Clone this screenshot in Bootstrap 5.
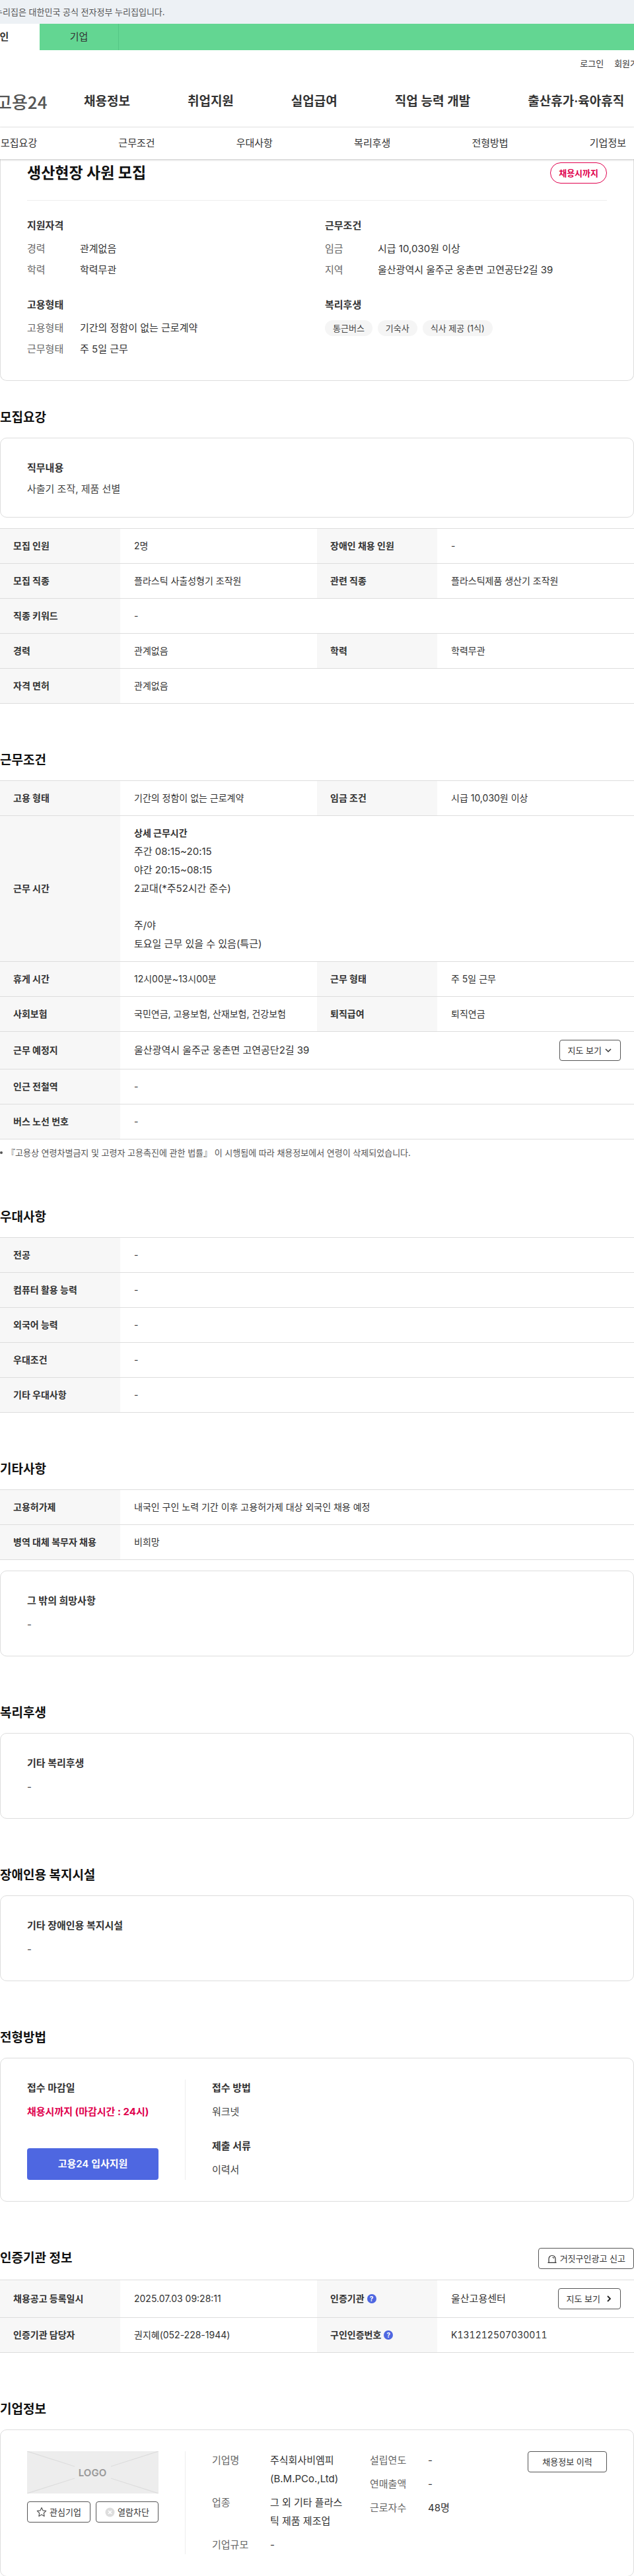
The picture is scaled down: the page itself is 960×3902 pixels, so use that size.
<!DOCTYPE html>
<html lang="ko">
<head>
<meta charset="utf-8">
<meta name="viewport" content="width=device-width, initial-scale=1">
<title>고용24 채용정보 - 생산현장 사원 모집</title>
<link href="https://cdn.jsdelivr.net/npm/bootstrap@5.3.0/dist/css/bootstrap.min.css" rel="stylesheet">
<style>
  body { font-family: Inter, "Noto Sans CJK KR", sans-serif; font-size: 15px; line-height: 26px; color: #333; background: #fff; overflow-x: hidden; }
  a { color: inherit; text-decoration: none; }
  p, dl, dd, ul { margin: 0; }
  dt { font-weight: 400; }
  .gov-bar { background: #edf1f5; height: 36px; line-height: 36px; font-size: 13px; color: #555; overflow: hidden; }
  .gov-bar p { margin-left: -8px; white-space: nowrap; }
  .site-tabs { background: #63d692; height: 40px; overflow: hidden; }
  .site-tabs a { width: 120px; line-height: 40px; text-align: center; border-right: 1px solid #55c785; }
  .site-tabs a.current { background: #fff; margin-left: -60px; font-weight: 700; border-color: #fff; }
  .member-links { height: 40px; overflow: hidden; font-size: 13px; margin-right: -18px; white-space: nowrap; }
  .main-nav { height: 77px; border-bottom: 1px solid #eee; white-space: nowrap; }
  .brand-name { font-family: "Noto Sans CJK KR", sans-serif; font-size: 26px; font-weight: 500; color: #555; margin-left: -6px; width: 133px; }
  .main-nav ul { gap: 87px; font-size: 19px; font-weight: 600; }
  .sub-nav { height: 48px; padding: 0 12px 0 1px; box-shadow: 0 1px 3px rgba(0,0,0,.25); position: relative; background: #fff; }
  .post-card { border: 1px solid #ddd; border-top: 0; border-radius: 0 0 10px 10px; padding: 4px 40px 31px; }
  .post-card h1 { font-size: 23px; font-weight: 700; line-height: 34px; margin: 0; color: #111; }
  .deadline { border: 1px solid #e0004d; border-radius: 16px; color: #e0004d; font-size: 13px; font-weight: 700; line-height: 30px; padding: 0 12px; }
  .post-rule { border-top: 1px solid #eee; margin: 24px 0 25px; }
  .spec-grid { display: grid; grid-template-columns: 427fr 427fr; column-gap: 24px; row-gap: 24px; }
  h3 { font-size: 15px; font-weight: 700; line-height: 26px; margin: 0 0 8px; color: #333; }
  .spec-grid h3 { margin-bottom: 6px; }
  .spec-row { display: flex; line-height: 32px; }
  .spec-row dt { width: 80px; color: #666; }
  .pill { background: #f5f5f5; border-radius: 12px; font-size: 13px; line-height: 24px; padding: 0 12px; color: #444; }
  section { margin-top: 70px; }
  section.first-section { margin-top: 40px; }
  h2 { font-size: 19px; font-weight: 700; line-height: 32px; margin: 0 0 14px; color: #111; }
  .panel { border: 1px solid #ddd; border-radius: 10px; padding: 32px 40px; }
  .panel p { line-height: 30px; color: #444; }
  .panel.duty { padding-bottom: 29px; }
  .panel.duty h3 { margin-bottom: 6px; }
  .panel.duty p { line-height: 26px; }
  .info-table { width: 100%; table-layout: fixed; border-collapse: separate; border-spacing: 0; border-top: 1px solid #ddd; font-size: 14px; line-height: 28px; }
  .info-table th, .info-table td { border-bottom: 1px solid #ddd; padding: 12px 20px; }
  .info-table th { background: #f7f7f7; font-weight: 700; }
  .info-table td { padding-left: 21px; color: #333; }
  .info-table .large-text { font-size: 15px; }
  .info-table .large-text strong { font-size: 14px; }
  .info-table .serial { font-variant-numeric: tabular-nums; }
  .th-col { width: 182px; }
  .line-btn { background: #fff; border: 1px solid #555; border-radius: 4px; font-size: 13px; line-height: 30px; padding: 0 12px; color: #333; display: inline-flex; align-items: center; justify-content: center; gap: 4px; white-space: nowrap; }
  .note { font-size: 13px; line-height: 24px; color: #555; margin-top: 8px; padding-left: 0; list-style: none; }
  .note li { display: flex; align-items: center; gap: 6px; }
  .note li::before { content: ""; width: 4px; height: 4px; border-radius: 50%; background: #555; flex: none; }
  .side-col { width: 240px; padding-right: 40px; border-right: 1px solid #eee; flex: none; }
  .apply-btn { background: #4e67e1; color: #fff; border: 0; border-radius: 4px; height: 48px; font-weight: 600; }
  .panel .urgent { color: #e0004d; font-weight: 700; }
  .help-btn { background: #4e67e1; color: #fff; border: 0; border-radius: 50%; width: 14px; height: 14px; font-size: 10px; font-weight: 700; line-height: 14px; padding: 0; margin-left: 4px; vertical-align: 1px; }
  .company-grid { display: grid; grid-template-columns: 1fr 1fr 120px; column-gap: 31px; align-items: start; }
  .company-grid dl { display: grid; grid-template-columns: 88px 1fr; row-gap: 8px; line-height: 28px; }
  .company-grid dt { color: #666; }
  .company-panel { padding-bottom: 33px; }
  .company-side { min-height: 155px; }
</style>
</head>
<body>
<header>
  <div class="gov-bar"><p>누리집은 대한민국 공식 전자정부 누리집입니다.</p></div>
  <nav class="site-tabs d-flex" aria-label="이용자 구분"><a href="#" class="current">개인</a><a href="#">기업</a></nav>
  <div class="member-links d-flex justify-content-end align-items-center gap-3"><a href="#">로그인</a><a href="#">회원가입</a></div>
  <nav class="main-nav d-flex align-items-center" aria-label="주 메뉴">
    <a href="#" class="brand-name">고용24</a>
    <ul class="d-flex list-unstyled">
      <li><a href="#">채용정보</a></li><li><a href="#">취업지원</a></li><li><a href="#">실업급여</a></li><li><a href="#">직업 능력 개발</a></li><li><a href="#">출산휴가·육아휴직</a></li>
    </ul>
  </nav>
  <nav class="sub-nav d-flex justify-content-between align-items-center" aria-label="상세 메뉴">
    <a href="#recruit">모집요강</a><a href="#work">근무조건</a><a href="#prefer">우대사항</a><a href="#welfare">복리후생</a><a href="#method">전형방법</a><a href="#company">기업정보</a>
  </nav>
</header>
<main>
  <article class="post-card">
    <div class="d-flex justify-content-between align-items-center">
      <h1>생산현장 사원 모집</h1><span class="deadline">채용시까지</span>
    </div>
    <div class="post-rule"></div>
    <div class="spec-grid">
      <div><h3>지원자격</h3><dl><div class="spec-row"><dt>경력</dt><dd>관계없음</dd></div><div class="spec-row"><dt>학력</dt><dd>학력무관</dd></div></dl></div>
      <div><h3>근무조건</h3><dl><div class="spec-row"><dt>임금</dt><dd>시급 10,030원 이상</dd></div><div class="spec-row"><dt>지역</dt><dd>울산광역시 울주군 웅촌면 고연공단2길 39</dd></div></dl></div>
      <div><h3>고용형태</h3><dl><div class="spec-row"><dt>고용형태</dt><dd>기간의 정함이 없는 근로계약</dd></div><div class="spec-row"><dt>근무형태</dt><dd>주 5일 근무</dd></div></dl></div>
      <div><h3>복리후생</h3><div class="d-flex gap-2 pt-1"><span class="pill">통근버스</span><span class="pill">기숙사</span><span class="pill">식사 제공 (1식)</span></div></div>
    </div>
  </article>

  <section id="recruit" class="first-section">
    <h2>모집요강</h2>
    <div class="panel duty mb-3"><h3>직무내용</h3><p>사출기 조작, 제품 선별</p></div>
    <table class="info-table">
      <colgroup><col class="th-col"><col><col class="th-col"><col></colgroup>
      <tbody>
        <tr><th scope="row">모집 인원</th><td>2명</td><th scope="row">장애인 채용 인원</th><td>-</td></tr>
        <tr><th scope="row">모집 직종</th><td>플라스틱 사출성형기 조작원</td><th scope="row">관련 직종</th><td>플라스틱제품 생산기 조작원</td></tr>
        <tr><th scope="row">직종 키워드</th><td colspan="3">-</td></tr>
        <tr><th scope="row">경력</th><td>관계없음</td><th scope="row">학력</th><td>학력무관</td></tr>
        <tr><th scope="row">자격 면허</th><td colspan="3">관계없음</td></tr>
      </tbody>
    </table>
  </section>

  <section id="work">
    <h2>근무조건</h2>
    <table class="info-table">
      <colgroup><col class="th-col"><col><col class="th-col"><col></colgroup>
      <tbody>
        <tr><th scope="row">고용 형태</th><td>기간의 정함이 없는 근로계약</td><th scope="row">임금 조건</th><td>시급 10,030원 이상</td></tr>
        <tr><th scope="row">근무 시간</th><td colspan="3" class="large-text"><strong class="d-block">상세 근무시간</strong>주간 08:15~20:15<br>야간 20:15~08:15<br>2교대(*주52시간 준수)<br><br>주/야<br>토요일 근무 있을 수 있음(특근)</td></tr>
        <tr><th scope="row">휴게 시간</th><td>12시00분~13시00분</td><th scope="row">근무 형태</th><td>주 5일 근무</td></tr>
        <tr><th scope="row">사회보험</th><td>국민연금, 고용보험, 산재보험, 건강보험</td><th scope="row">퇴직급여</th><td>퇴직연금</td></tr>
        <tr><th scope="row">근무 예정지</th><td colspan="3" class="large-text"><div class="d-flex justify-content-between align-items-center">울산광역시 울주군 웅촌면 고연공단2길 39<button type="button" class="line-btn">지도 보기<svg width="12" height="12" viewBox="0 0 12 12" fill="none" stroke="#333" stroke-width="1.5" aria-hidden="true"><path d="M2 4l4 4 4-4"/></svg></button></div></td></tr>
        <tr><th scope="row">인근 전철역</th><td colspan="3">-</td></tr>
        <tr><th scope="row">버스 노선 번호</th><td colspan="3">-</td></tr>
      </tbody>
    </table>
    <ul class="note"><li>『고용상 연령차별금지 및 고령자 고용촉진에 관한 법률』 이 시행됨에 따라 채용정보에서 연령이 삭제되었습니다.</li></ul>
  </section>

  <section id="prefer">
    <h2>우대사항</h2>
    <table class="info-table">
      <colgroup><col class="th-col"><col></colgroup>
      <tbody>
        <tr><th scope="row">전공</th><td>-</td></tr>
        <tr><th scope="row">컴퓨터 활용 능력</th><td>-</td></tr>
        <tr><th scope="row">외국어 능력</th><td>-</td></tr>
        <tr><th scope="row">우대조건</th><td>-</td></tr>
        <tr><th scope="row">기타 우대사항</th><td>-</td></tr>
      </tbody>
    </table>
  </section>

  <section>
    <h2>기타사항</h2>
    <table class="info-table mb-3">
      <colgroup><col class="th-col"><col></colgroup>
      <tbody>
        <tr><th scope="row">고용허가제</th><td>내국인 구인 노력 기간 이후 고용허가제 대상 외국인 채용 예정</td></tr>
        <tr><th scope="row">병역 대체 복무자 채용</th><td>비희망</td></tr>
      </tbody>
    </table>
    <div class="panel"><h3>그 밖의 희망사항</h3><p>-</p></div>
  </section>

  <section id="welfare">
    <h2>복리후생</h2>
    <div class="panel"><h3>기타 복리후생</h3><p>-</p></div>
  </section>

  <section>
    <h2>장애인용 복지시설</h2>
    <div class="panel"><h3>기타 장애인용 복지시설</h3><p>-</p></div>
  </section>

  <section id="method">
    <h2>전형방법</h2>
    <div class="panel d-flex">
      <div class="side-col d-flex flex-column">
        <h3>접수 마감일</h3><p class="urgent">채용시까지 (마감시간 : 24시)</p>
        <button type="button" class="apply-btn mt-auto w-100">고용24 입사지원</button>
      </div>
      <div class="ps-4 ms-3">
        <h3>접수 방법</h3><p class="mb-4">워크넷</p>
        <h3>제출 서류</h3><p>이력서</p>
      </div>
    </div>
  </section>

  <section>
    <div class="d-flex justify-content-between align-items-center mb-3">
      <h2 class="mb-0">인증기관 정보</h2>
      <button type="button" class="line-btn"><svg width="16" height="15" viewBox="0 0 16 15" fill="none" stroke="#333" stroke-width="1.2" aria-hidden="true"><path d="M1.500 13.400h13M3 13.400V7.500a5 5 0 0 1 10 0v5.900M8.500 5a2.200 2.200 0 0 1 2 2"/></svg>거짓구인광고 신고</button>
    </div>
    <table class="info-table">
      <colgroup><col class="th-col"><col><col class="th-col"><col></colgroup>
      <tbody>
        <tr><th scope="row">채용공고 등록일시</th><td>2025.07.03 09:28:11</td><th scope="row">인증기관<button type="button" class="help-btn" aria-label="인증기관 도움말">?</button></th><td class="large-text"><div class="d-flex justify-content-between align-items-center">울산고용센터<button type="button" class="line-btn">지도 보기<svg width="14" height="12" viewBox="0 0 14 12" fill="none" stroke="#222" stroke-width="1.8" aria-hidden="true"><path d="M7 2l4 4-4 4"/></svg></button></div></td></tr>
        <tr><th scope="row">인증기관 담당자</th><td>권지혜(052-228-1944)</td><th scope="row">구인인증번호<button type="button" class="help-btn" aria-label="구인인증번호 도움말">?</button></th><td class="serial">K131212507030011</td></tr>
      </tbody>
    </table>
  </section>

  <section id="company">
    <h2>기업정보</h2>
    <div class="panel company-panel d-flex">
      <div class="side-col company-side">
        <svg class="d-block w-100" height="64" viewBox="0 0 199 64" role="img" aria-label="기업 로고"><rect width="199" height="64" fill="#ededed"/><path d="M0 0l72 23M199 0l-72 23M0 64l72-23M199 64l-72-23" stroke="#ddd" stroke-width="1.2"/><text x="99" y="38" text-anchor="middle" font-family="Inter, sans-serif" font-size="15" font-weight="600" fill="#999">LOGO</text></svg>
        <div class="d-flex gap-2 mt-2 pt-1">
          <button type="button" class="line-btn flex-fill px-0"><svg width="16" height="16" viewBox="0 0 16 16" fill="none" stroke="#555" stroke-width="1.2" stroke-linejoin="round" aria-hidden="true"><path d="M8 1.500l2 4.300 4.700.6-3.400 3.300.8 4.700L8 12.100l-4.100 2.300.8-4.700L1.300 6.400 6 5.800z"/></svg>관심기업</button>
          <button type="button" class="line-btn flex-fill px-0"><svg width="15" height="15" viewBox="0 0 15 15" aria-hidden="true"><circle cx="7.500" cy="7.500" r="7" fill="#ddd"/><path d="M5 5l5 5M10 5l-5 5" stroke="#fff" stroke-width="1.5"/></svg>열람차단</button>
        </div>
      </div>
      <div class="company-grid ps-4 ms-3 flex-fill">
        <dl><dt>기업명</dt><dd>주식회사비엠피 (B.M.PCo.,Ltd)</dd><dt>업종</dt><dd>그 외 기타 플라스틱 제품 제조업</dd><dt>기업규모</dt><dd>-</dd></dl>
        <dl><dt>설립연도</dt><dd>-</dd><dt>연매출액</dt><dd>-</dd><dt>근로자수</dt><dd>48명</dd></dl>
        <button type="button" class="line-btn px-0">채용정보 이력</button>
      </div>
    </div>
  </section>
</main>
<script src="https://cdn.jsdelivr.net/npm/bootstrap@5.3.0/dist/js/bootstrap.bundle.min.js"></script>
</body>
</html>
